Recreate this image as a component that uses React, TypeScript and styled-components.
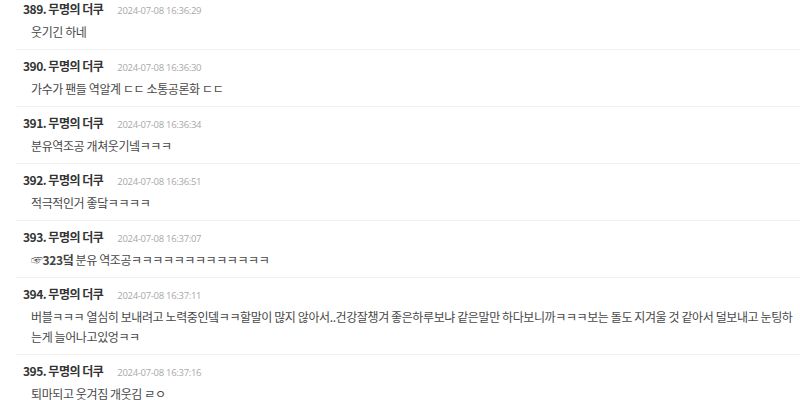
import styled, { createGlobalStyle } from "styled-components";

const GlobalStyle = createGlobalStyle`
  html, body {
    margin: 0;
    padding: 0;
    background: #fff;
    overflow: hidden;
  }
  body {
    font-family: "Noto Sans CJK KR", "Noto Sans", sans-serif;
  }
`;

const List = styled.ul`
  list-style: none;
  margin: -7px 0 0 0;
  padding: 0 0 0 16px;
`;

const Item = styled.li`
  padding: 6px 0 7px;
  border-bottom: 1px solid #f2f2f2;
`;

const Head = styled.div`
  display: flex;
  align-items: baseline;
  gap: 14px;
  padding-left: 7px;
  height: 20px;
  line-height: 20px;
`;

const Name = styled.strong`
  font-size: 12px;
  font-weight: 700;
  letter-spacing: -0.5px;
  color: #333;
`;

const Date = styled.span`
  font-family: "Open Sans", "Noto Sans", sans-serif;
  font-size: 9.5px;
  letter-spacing: -0.3px;
  color: #a8a8a8;
`;

const Body = styled.p`
  margin: 3px 0 0;
  padding-left: 15px;
  font-size: 12px;
  line-height: 20px;
  letter-spacing: -0.4px;
  word-break: break-all;
  color: #484848;
`;

const Anchor = styled.b`
  font-weight: 700;
  color: #444;
`;

type Reply = { no: number; time: string; text: React.ReactNode };

const replies: Reply[] = [
  { no: 389, time: "2024-07-08 16:36:29", text: "웃기긴 하네" },
  { no: 390, time: "2024-07-08 16:36:30", text: "가수가 팬들 역알계 ㄷㄷ 소통공론화 ㄷㄷ" },
  { no: 391, time: "2024-07-08 16:36:34", text: "분유역조공 개쳐웃기넼ㅋㅋㅋ" },
  { no: 392, time: "2024-07-08 16:36:51", text: "적극적인거 좋닼ㅋㅋㅋㅋ" },
  {
    no: 393,
    time: "2024-07-08 16:37:07",
    text: (
      <>
        ☞<Anchor>323덬</Anchor> 분유 역조공ㅋㅋㅋㅋㅋㅋㅋㅋㅋㅋㅋㅋㅋ
      </>
    ),
  },
  {
    no: 394,
    time: "2024-07-08 16:37:11",
    text: "버블ㅋㅋㅋ 열심히 보내려고 노력중인뎈ㅋㅋ할말이 많지 않아서..건강잘챙겨 좋은하루보냐 같은말만 하다보니까ㅋㅋㅋ보는 돌도 지겨울 것 같아서 덜보내고 눈팅하는게 늘어나고있엉ㅋㅋ",
  },
  { no: 395, time: "2024-07-08 16:37:16", text: "퇴마되고 웃겨짐 개웃김 ㄹㅇ" },
];

export default function App() {
  return (
    <>
      <GlobalStyle />
      <List>
        {replies.map((r) => (
          <Item key={r.no}>
            <Head>
              <Name>{r.no}. 무명의 더쿠</Name>
              <Date>{r.time}</Date>
            </Head>
            <Body>{r.text}</Body>
          </Item>
        ))}
      </List>
    </>
  );
}
